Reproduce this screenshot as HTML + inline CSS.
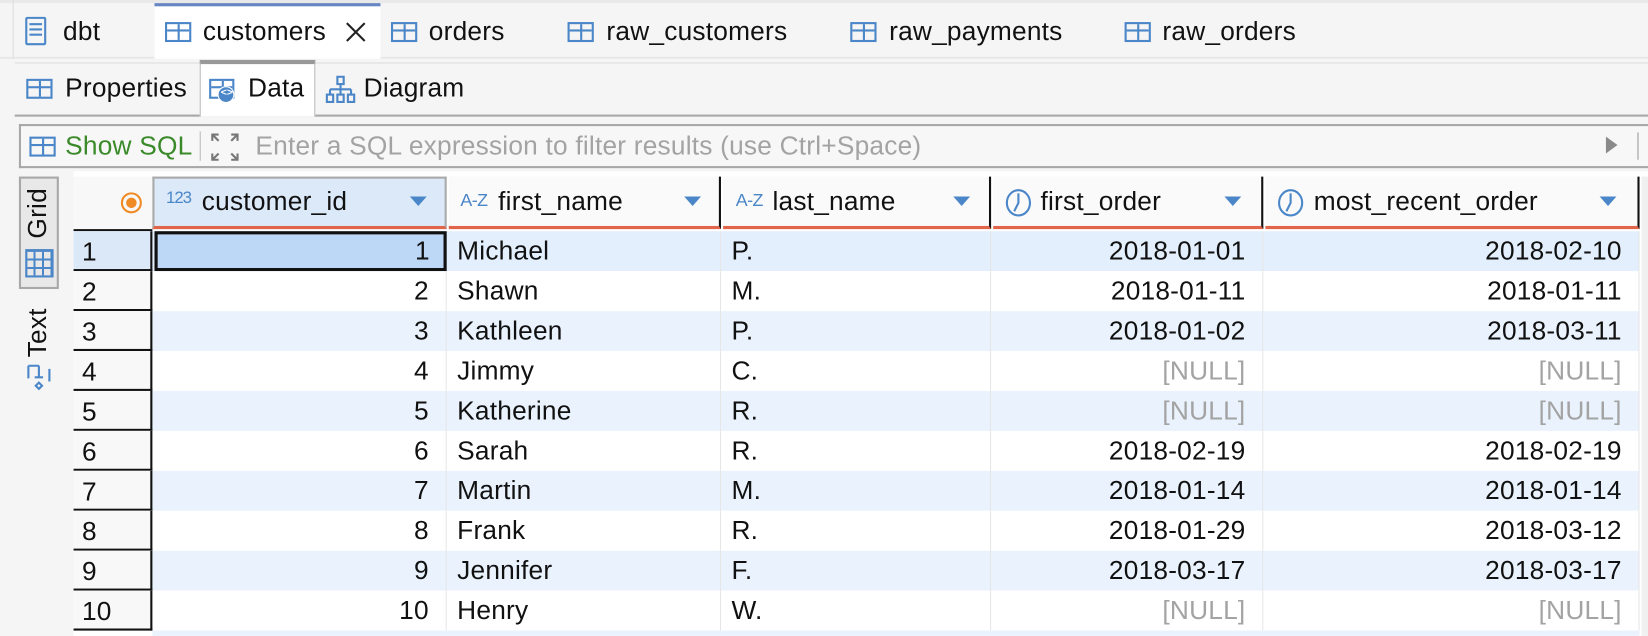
<!DOCTYPE html>
<html><head><meta charset="utf-8"><style>
*{box-sizing:border-box;margin:0;padding:0}
html,body{width:1648px;height:636px;overflow:hidden;background:#f5f5f5}
#w{position:absolute;left:0;top:0;width:1568px;height:605px;transform:scale(1.051);transform-origin:0 0;font-family:"Liberation Sans",Helvetica,Arial,sans-serif;font-size:25px;letter-spacing:0.2px;color:#111}
.a{position:absolute}
.t{position:absolute;white-space:nowrap;line-height:1}
.ti{position:absolute;width:25px;height:19px;border:2px solid #4a86c8;background:linear-gradient(#4a86c8,#4a86c8) 0 5px/100% 2px no-repeat,linear-gradient(#4a86c8,#4a86c8) 10px 0/2px 100% no-repeat}
.row{position:absolute;left:70px;width:1490px;height:38px}
.rn{position:absolute;left:0;top:0;width:75px;height:38px;border-bottom:2px solid #111;border-right:2px solid #111;background:#f8f8f8}
.c{position:absolute;top:0;height:38px;border-right:1px solid #e6e6e6;line-height:38px;white-space:nowrap;overflow:hidden}
.r{text-align:right;padding-right:16px}
.l{padding-left:10px}
.n{color:#a3a3a3}
.hd{position:absolute;top:168px;height:50px;border-bottom:3px solid #e0654b;background:#fafafa}
.tri{position:absolute;top:22px;width:0;height:0;border-left:8px solid transparent;border-right:8px solid transparent;border-top:9px solid #4a86c8}
.ico{position:absolute;top:16px;color:#4a86c8;font-size:17px;line-height:1;letter-spacing:-0.5px}
</style></head><body><div id="w">
<div class="a" style="left:0;top:0;width:1568px;height:56px;background:#f5f5f5;border-bottom:2px solid #e8e8e8"></div>
<div class="a" style="left:0;top:0;width:1568px;height:3px;background:#e9e9e9"></div>
<div class="a" style="left:12px;top:0;width:1px;height:56px;background:#ddd"></div>
<div class="a" style="left:24px;top:16px;width:20px;height:27px;border:2px solid #4a86c8;border-radius:2px"></div>
<div class="a" style="left:28px;top:22px;width:12px;height:2px;background:#4a86c8;box-shadow:0 5px #4a86c8,0 10px #4a86c8"></div>
<div class="t" style="left:60px;top:18px">dbt</div>
<div class="a" style="left:147px;top:3px;width:215px;height:53px;background:#fff;border-top:3px solid #6685c2"></div>
<div class="ti" style="left:157px;top:21px"></div>
<div class="t" style="left:193px;top:18px">customers</div>
<svg class="a" style="left:329px;top:21px" width="19" height="19" viewBox="0 0 19 19" stroke="#222" stroke-width="2"><path d="M1 1l17 17M18 1L1 18"/></svg>
<div class="ti" style="left:372px;top:21px"></div><div class="t" style="left:408px;top:18px">orders</div>
<div class="ti" style="left:540px;top:21px"></div><div class="t" style="left:577px;top:18px">raw_customers</div>
<div class="ti" style="left:809px;top:21px"></div><div class="t" style="left:846px;top:18px">raw_payments</div>
<div class="ti" style="left:1070px;top:21px"></div><div class="t" style="left:1106px;top:18px">raw_orders</div>
<div class="a" style="left:14px;top:59px;width:1554px;height:52px;background:#f5f5f5;border-top:2px solid #e8e8e8;border-bottom:2px solid #a8a8a8"></div>
<div class="ti" style="left:25px;top:75px"></div><div class="t" style="left:62px;top:72px">Properties</div>
<div class="a" style="left:190px;top:57px;width:110px;height:54px;background:#fff;border:1px solid #bbb;border-top:4px solid #999;border-bottom:none"></div>
<div class="ti" style="left:199px;top:75px;width:24px"></div>
<div class="a" style="left:207px;top:82px;width:16px;height:16px;border-radius:50%;background:#4a86c8;border:1.5px solid #fff"></div>
<div class="t" style="left:210px;top:84px;font-size:10px;color:#fff;font-weight:bold;letter-spacing:0">&lt;&gt;</div>
<div class="t" style="left:236px;top:72px">Data</div>
<svg class="a" style="left:309px;top:72px" width="30" height="28" viewBox="0 0 30 28" fill="none" stroke="#4a86c8" stroke-width="2"><rect x="12" y="1" width="6" height="7"/><path d="M15 8v5M5 13h20M5 13v5M15 13v5M25 13v5"/><rect x="2" y="18" width="6" height="7"/><rect x="12" y="18" width="6" height="7"/><rect x="22" y="18" width="6" height="7"/></svg>
<div class="t" style="left:346px;top:72px">Diagram</div>
<div class="a" style="left:18px;top:118px;width:1550px;height:42px;background:#f7f7f7;border:2px solid #a8a8a8;border-right:none"></div>
<div class="ti" style="left:28px;top:130px"></div>
<div class="t" style="left:62px;top:127px;color:#3a8a2a">Show SQL</div>
<div class="a" style="left:190px;top:125px;width:1px;height:28px;background:#bbb"></div>
<svg class="a" style="left:200px;top:126px" width="28" height="28" viewBox="0 0 28 28" fill="none" stroke="#777" stroke-width="2"><path d="M2 8V2h6M2 2l6 6M26 8V2h-6M26 2l-6 6M2 20v6h6M2 26l6-6M26 20v6h-6M26 26l-6-6"/></svg>
<div class="t" style="left:243px;top:127px;color:#a3a3a3">Enter a SQL expression to filter results (use Ctrl+Space)</div>
<div class="a" style="left:1528px;top:130px;border-top:8px solid transparent;border-bottom:8px solid transparent;border-left:11px solid #8a8a8a"></div>
<div class="a" style="left:1558px;top:126px;width:1px;height:26px;background:#999"></div>
<div class="a" style="left:18px;top:168px;width:38px;height:107px;background:#e8e8e8;border:2px solid #a8a8a8"></div>
<div class="t" style="left:24px;top:227px;transform:rotate(-90deg);transform-origin:0 0">Grid</div>
<div class="a" style="left:24px;top:237px;width:27px;height:27px;border:2px solid #4a86c8;background:repeating-linear-gradient(90deg,transparent 0 6px,#4a86c8 6px 8px),repeating-linear-gradient(0deg,transparent 0 6px,#4a86c8 6px 8px)"></div>
<div class="t" style="left:24px;top:340px;transform:rotate(-90deg);transform-origin:0 0">Text</div>
<svg class="a" style="left:24px;top:345px" width="26" height="30" viewBox="0 0 26 30" fill="none" stroke="#4a86c8" stroke-width="2"><path d="M3 3v12M3 3h10M13 3v11M9 14h8M23 6v12"/><path d="M13 19l3 3-3 3-3-3z"/></svg>
<div class="a" style="left:70px;top:163px;width:1498px;height:442px;background:#fff"></div>
<div class="a" style="left:70px;top:168px;width:75px;height:52px;background:#f8f8f8;border-bottom:2px solid #111"></div>
<div class="a" style="left:115px;top:183px;width:20px;height:20px;border:2px solid #f08a24;border-radius:50%"></div>
<div class="a" style="left:120px;top:188px;width:10px;height:10px;background:#f08a24;border-radius:50%"></div>
<div class="hd" style="left:145px;width:280px;background:#dce9f9;border:2px solid #aaa;border-bottom:3px solid #e0654b"></div>
<div class="ico" style="left:158px;top:181px;font-size:16px;letter-spacing:-1px">123</div><div class="t" style="left:192px;top:180px">customer_id</div><div class="tri" style="left:390px;top:187px"></div>
<div class="hd" style="left:427px;width:259px;border-right:2px solid #111"></div>
<div class="ico" style="left:438px;top:182px">A-Z</div><div class="t" style="left:474px;top:180px">first_name</div><div class="tri" style="left:651px;top:187px"></div>
<div class="hd" style="left:688px;width:255px;border-right:2px solid #111"></div>
<div class="ico" style="left:700px;top:182px">A-Z</div><div class="t" style="left:735px;top:180px">last_name</div><div class="tri" style="left:907px;top:187px"></div>
<div class="hd" style="left:945px;width:257px;border-right:2px solid #111"></div>
<svg class="a" style="left:956px;top:179px" width="26" height="28" viewBox="0 0 26 28" fill="none" stroke="#4a86c8" stroke-width="2"><ellipse cx="13" cy="14" rx="11" ry="12"/><path d="M13 5v9l-4 8"/></svg>
<div class="t" style="left:990px;top:180px">first_order</div><div class="tri" style="left:1165px;top:187px"></div>
<div class="hd" style="left:1204px;width:356px;border-right:2px solid #111"></div>
<svg class="a" style="left:1215px;top:179px" width="26" height="28" viewBox="0 0 26 28" fill="none" stroke="#4a86c8" stroke-width="2"><ellipse cx="13" cy="14" rx="11" ry="12"/><path d="M13 5v9l-4 8"/></svg>
<div class="t" style="left:1250px;top:180px">most_recent_order</div><div class="tri" style="left:1522px;top:187px"></div>
<div class="a" style="left:1562px;top:168px;width:6px;height:437px;background:#f0f0f0"></div>

<div class="row" style="top:220px;background:#e3effc"><div class="rn" style="background:#dbe8f8"><span class="t" style="left:8px;top:8px">1</span></div><div class="c r" style="left:77px;width:278px;background:#bdd8f6;border:3px solid #111;line-height:32px;padding-right:13px">1</div><div class="c l" style="left:355px;width:261px">Michael</div><div class="c l" style="left:616px;width:257px">P.</div><div class="c r" style="left:873px;width:259px">2018-01-01</div><div class="c r" style="left:1132px;width:358px">2018-02-10</div></div>
<div class="row" style="top:258px;background:#fff"><div class="rn"><span class="t" style="left:8px;top:8px">2</span></div><div class="c r" style="left:75px;width:280px">2</div><div class="c l" style="left:355px;width:261px">Shawn</div><div class="c l" style="left:616px;width:257px">M.</div><div class="c r" style="left:873px;width:259px">2018-01-11</div><div class="c r" style="left:1132px;width:358px">2018-01-11</div></div>
<div class="row" style="top:296px;background:#eaf3fd"><div class="rn"><span class="t" style="left:8px;top:8px">3</span></div><div class="c r" style="left:75px;width:280px">3</div><div class="c l" style="left:355px;width:261px">Kathleen</div><div class="c l" style="left:616px;width:257px">P.</div><div class="c r" style="left:873px;width:259px">2018-01-02</div><div class="c r" style="left:1132px;width:358px">2018-03-11</div></div>
<div class="row" style="top:334px;background:#fff"><div class="rn"><span class="t" style="left:8px;top:8px">4</span></div><div class="c r" style="left:75px;width:280px">4</div><div class="c l" style="left:355px;width:261px">Jimmy</div><div class="c l" style="left:616px;width:257px">C.</div><div class="c r n" style="left:873px;width:259px">[NULL]</div><div class="c r n" style="left:1132px;width:358px">[NULL]</div></div>
<div class="row" style="top:372px;background:#eaf3fd"><div class="rn"><span class="t" style="left:8px;top:8px">5</span></div><div class="c r" style="left:75px;width:280px">5</div><div class="c l" style="left:355px;width:261px">Katherine</div><div class="c l" style="left:616px;width:257px">R.</div><div class="c r n" style="left:873px;width:259px">[NULL]</div><div class="c r n" style="left:1132px;width:358px">[NULL]</div></div>
<div class="row" style="top:410px;background:#fff"><div class="rn"><span class="t" style="left:8px;top:8px">6</span></div><div class="c r" style="left:75px;width:280px">6</div><div class="c l" style="left:355px;width:261px">Sarah</div><div class="c l" style="left:616px;width:257px">R.</div><div class="c r" style="left:873px;width:259px">2018-02-19</div><div class="c r" style="left:1132px;width:358px">2018-02-19</div></div>
<div class="row" style="top:448px;background:#eaf3fd"><div class="rn"><span class="t" style="left:8px;top:8px">7</span></div><div class="c r" style="left:75px;width:280px">7</div><div class="c l" style="left:355px;width:261px">Martin</div><div class="c l" style="left:616px;width:257px">M.</div><div class="c r" style="left:873px;width:259px">2018-01-14</div><div class="c r" style="left:1132px;width:358px">2018-01-14</div></div>
<div class="row" style="top:486px;background:#fff"><div class="rn"><span class="t" style="left:8px;top:8px">8</span></div><div class="c r" style="left:75px;width:280px">8</div><div class="c l" style="left:355px;width:261px">Frank</div><div class="c l" style="left:616px;width:257px">R.</div><div class="c r" style="left:873px;width:259px">2018-01-29</div><div class="c r" style="left:1132px;width:358px">2018-03-12</div></div>
<div class="row" style="top:524px;background:#eaf3fd"><div class="rn"><span class="t" style="left:8px;top:8px">9</span></div><div class="c r" style="left:75px;width:280px">9</div><div class="c l" style="left:355px;width:261px">Jennifer</div><div class="c l" style="left:616px;width:257px">F.</div><div class="c r" style="left:873px;width:259px">2018-03-17</div><div class="c r" style="left:1132px;width:358px">2018-03-17</div></div>
<div class="row" style="top:562px;background:#fff"><div class="rn"><span class="t" style="left:8px;top:8px">10</span></div><div class="c r" style="left:75px;width:280px">10</div><div class="c l" style="left:355px;width:261px">Henry</div><div class="c l" style="left:616px;width:257px">W.</div><div class="c r n" style="left:873px;width:259px">[NULL]</div><div class="c r n" style="left:1132px;width:358px">[NULL]</div></div>
<div class="a" style="left:145px;top:600px;width:1415px;height:5px;background:#eaf3fd"></div>
</div></body></html>
